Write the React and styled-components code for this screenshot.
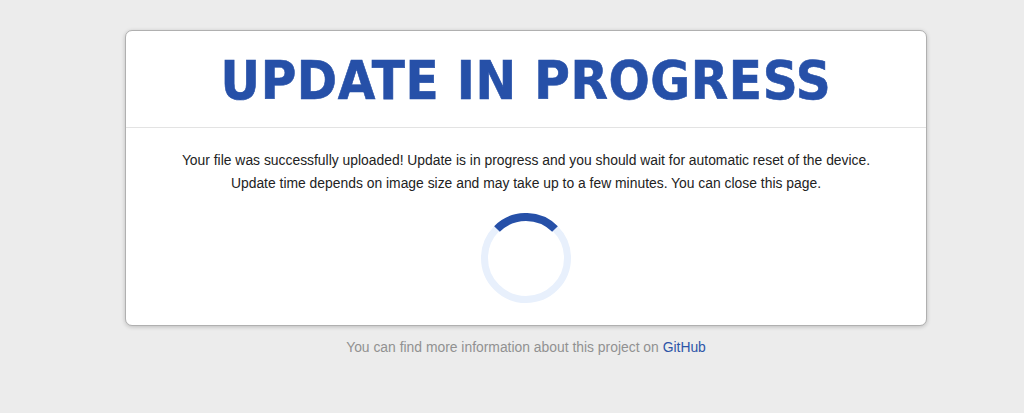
import styled, { createGlobalStyle } from 'styled-components';

const GlobalStyle = createGlobalStyle`
  html, body {
    margin: 0;
    height: 100%;
    background: #ececec;
    font-family: "Liberation Sans", Arial, sans-serif;
    overflow: hidden;
  }
`;

const Page = styled.div`
  width: 802px;
  margin-left: 125px;
  padding-top: 30px;
`;

const Card = styled.div`
  box-sizing: border-box;
  height: 296px;
  background: #fff;
  border: 1px solid #b0b0b0;
  border-radius: 7px;
  box-shadow: 0 1px 4px rgba(0, 0, 0, 0.2);
  overflow: hidden;
`;

const Header = styled.div`
  box-sizing: border-box;
  height: 97px;
  border-bottom: 1px solid #e3e3e3;
  text-align: center;
`;

const Title = styled.h1`
  margin: 0;
  font-family: "DejaVu Sans Condensed", "DejaVu Sans", sans-serif;
  font-size: 54px;
  font-weight: 700;
  line-height: 99px;
  letter-spacing: 0.6px;
  color: #2650a8;
  -webkit-text-stroke: 0.6px #2650a8;
  white-space: nowrap;
`;

const Body = styled.div`
  display: flex;
  flex-direction: column;
  align-items: center;
  padding-top: 21px;
`;

const Message = styled.p`
  margin: 0;
  font-size: 13.88px;
  line-height: 23px;
  color: #222;
  text-align: center;
  white-space: nowrap;
`;

const Spinner = styled.svg`
  display: block;
  width: 90px;
  height: 90px;
  margin-top: 18px;
`;

const Footer = styled.p`
  margin: 12px 0 0;
  font-size: 13.88px;
  line-height: 18px;
  color: #919191;
  text-align: center;
`;

const GitHubLink = styled.a`
  color: #2d55a8;
  text-decoration: none;
`;

export default function App() {
  return (
    <>
      <GlobalStyle />
      <Page>
        <Card>
          <Header>
            <Title>UPDATE IN PROGRESS</Title>
          </Header>
          <Body>
            <Message>
              Your file was successfully uploaded! Update is in progress and you should wait for automatic reset of the device.
              <br />
              Update time depends on image size and may take up to a few minutes. You can close this page.
            </Message>
            <Spinner viewBox="0 0 90 90">
              <circle cx="45" cy="45" r="41.5" fill="none" stroke="#e8f0fc" strokeWidth="7" />
              <path d="M16 16 A41 41 0 0 1 74 16" fill="none" stroke="#2650a8" strokeWidth="8" />
            </Spinner>
          </Body>
        </Card>
        <Footer>
          You can find more information about this project on <GitHubLink href="#">GitHub</GitHubLink>
        </Footer>
      </Page>
    </>
  );
}
